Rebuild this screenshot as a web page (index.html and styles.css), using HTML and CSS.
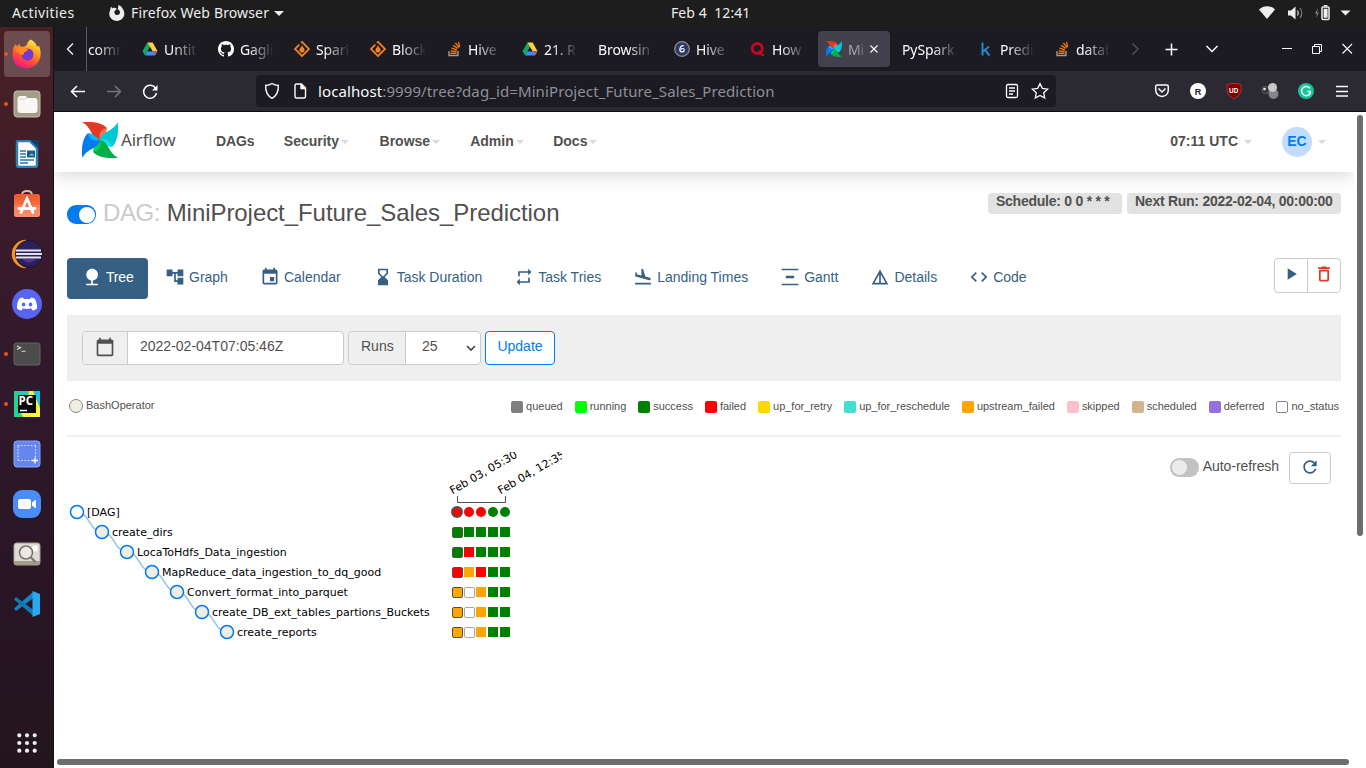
FILE: index.html
```html
<!DOCTYPE html>
<html lang="en">
<head>
<meta charset="utf-8">
<title>MiniProject_Future_Sales_Prediction - Tree - Airflow</title>
<link rel="stylesheet" href="styles.css">
</head>
<body>
<svg class="defs" width="0" height="0">
  <defs>
    <symbol id="drive" viewBox="0 0 16 16"><path d="M5.300 1.500L8 6 3 14.500.5 10.200z" fill="#11a861"/><path d="M5.300 1.500h5.400L15.500 10.200h-5z" fill="#ffcf48"/><path d="M3 14.500l2.500-4.300h10L13 14.500z" fill="#4688f4"/><path d="M8 6.200l2.400 4H5.600z" fill="#1c1b22"/><path d="M11.500 10.200h4L13.500 13.600z" fill="#ea4335"/></symbol>
    <symbol id="spark" viewBox="0 0 16 16"><path d="M7 1.800L8 .9l7.100 7.100L8 15.100.9 8l4.400-4.400" fill="none" stroke="#f48024" stroke-width="1.800"/><path d="M8 4c.3 2 2.600 2.800 2.600 5A2.600 2.600 0 0 1 5.400 9C5.400 7 7.800 6.200 8 4z" fill="#f48024"/></symbol>
    <symbol id="stack" viewBox="0 0 16 16"><path d="M3 10v4.500h9V10" fill="none" stroke="#9a9b9e" stroke-width="1.400"/><path d="M4.500 12.300h6M4.600 9.900l6 .6M5.400 7.200l5.600 1.600M7 4.400l4.900 3.100M9.400 2l3.700 4.600M12.400.8l1.300 5.200" stroke="#f2740d" stroke-width="1.400"/></symbol>
    <symbol id="pin" viewBox="0 0 36 36">
      <g><path d="M0 .3C10-.8 20 .5 25 6L22 10 18 18C8 16 11 6 0 .3z" fill="#e43921"/><path d="M25 6C25.500 9 22 13 18 18 16.500 12 19 7 25 6z" fill="#ff7557"/></g>
      <g transform="rotate(90 18 18)"><path d="M0 .3C10-.8 20 .5 25 6L22 10 18 18C8 16 11 6 0 .3z" fill="#00c7d4"/><path d="M25 6C25.500 9 22 13 18 18 16.500 12 19 7 25 6z" fill="#11e1ee"/></g>
      <g transform="rotate(180 18 18)"><path d="M0 .3C10-.8 20 .5 25 6L22 10 18 18C8 16 11 6 0 .3z" fill="#00ad46"/><path d="M25 6C25.500 9 22 13 18 18 16.500 12 19 7 25 6z" fill="#04d659"/></g>
      <g transform="rotate(270 18 18)"><path d="M0 .3C10-.8 20 .5 25 6L22 10 18 18C8 16 11 6 0 .3z" fill="#017cee"/><path d="M25 6C25.500 9 22 13 18 18 16.500 12 19 7 25 6z" fill="#0cb6ff"/></g>
    </symbol>
    <linearGradient id="fox" x1=".8" y1="0" x2=".3" y2="1"><stop offset="0" stop-color="#fff44f"/><stop offset=".35" stop-color="#ffa21c"/><stop offset=".65" stop-color="#ff5138"/><stop offset="1" stop-color="#f0148c"/></linearGradient>
    <linearGradient id="bag" x1="0" y1="0" x2="0" y2="1"><stop offset="0" stop-color="#ee5a2b"/><stop offset="1" stop-color="#f98157"/></linearGradient>
    <linearGradient id="pyc"><stop offset="0" stop-color="#20d38c"/><stop offset=".6" stop-color="#1ecbd0"/><stop offset="1" stop-color="#1ac0ee"/></linearGradient>
  </defs>
</svg>

<header class="topbar">
  <span class="top-act">Activities</span>
  <svg class="top-fox" width="16" height="16" viewBox="0 0 16 16"><path d="M2 1.500l1.200 1.700C4.500 2.500 5.500 2.600 6.300 3l1.700.9-2.200 1.800C5 7 5.400 8.500 6.500 9.500c1.800 1.300 4.500.2 4.500-2 0-1.700-1-2.500-2.200-3.300L9.500 0c2.500 1 3.500 2.300 4 3.600C18 10 13.500 16 8 16S-1.500 11 1 5.500z" fill="#eee"/></svg>
  <span class="top-app">Firefox Web Browser</span>
  <i class="tri"></i>
  <span class="top-date">Feb 4&nbsp; 12:41</span>
  <svg class="top-status" width="96" height="18" viewBox="0 0 96 18"><path d="M0 5.500C4.500 1 11.500 1 16 5.500L8 15z" fill="#eee"/><path d="M29 6.500h3l4.500-4v13l-4.500-4h-3z" fill="#eee"/><path d="M38.500 6.500q1.500 2.500 0 5" fill="none" stroke="#ccc" stroke-width="1.400"/><path d="M41 4q3.500 5 0 10" fill="none" stroke="#777" stroke-width="1.300"/><path d="M59 4l-3 5.500h2L57 14l3-5.500h-2z" fill="#888"/><rect x="63" y="3" width="7" height="12.500" rx="1" fill="none" stroke="#eee" stroke-width="1.500"/><path d="M64.600 4.700h4v9h-4zM64.800 1h3.500v1.500h-3.500z" fill="#eee"/><path d="M81.500 6.500h10l-5 5z" fill="#eee"/></svg>
</header>

<div class="desk">
<aside class="dock">
  <div class="app active run"><svg width="30" height="30" viewBox="0 0 30 30"><path d="M18.500.5c3.500 1.600 5.500 4 6.500 7l2-.5c3 7 2 14-3 18.500-5.500 5-15 5-20 0C0 21 0 14 1.500 8L4 5l1 3 2.500-3.500.5 3 4 .3 3-1.800C15 4 16.500 2 18.500.5z" fill="url(#fox)"/><circle cx="15.500" cy="15.500" r="6" fill="#7139cf"/><path d="M4 11c4-3 7-2.500 8.500-1l4 .3c-1 2.200-3.500 2.500-4.500 3.500 0 2-1 2.500-3 2z" fill="#ff8a22"/></svg></div>
  <div class="app run"><svg width="28" height="28" viewBox="0 0 28 28"><rect x="1" y="1" width="26" height="26" rx="3" fill="#a49c88" stroke="#c3bda9"/><path d="M4.500 9q0-3 3-3h5l2 2h7q3 0 3 3v9q0 3-3 3h-14q-3 0-3-3z" fill="#f8f7f4"/><path d="M5.500 9h7l2-1" fill="none" stroke="#d8d5cc"/></svg></div>
  <div class="app"><svg width="26" height="28" viewBox="0 0 26 28"><path d="M4 1h12l7 7v17q0 2-2 2H5q-2 0-2-2V3q0-2 1-2z" fill="#fff" stroke="#2882b8" stroke-width="2.500"/><path d="M16 0h9v9z" fill="#103f60"/><path d="M6 11h6M6 14h6M6 17h6M6 20h14M6 23h8" stroke="#2479ad" stroke-width="1.400"/><path d="M13 10.500h8v7h-8z" fill="#1c5e8c"/><path d="M15 15.500l3-2 2 2z" fill="#9fcae5"/></svg></div>
  <div class="app"><svg width="28" height="28" viewBox="0 0 28 28"><path d="M9 5q0-4 5-4t5 4" fill="none" stroke="#d9c19e" stroke-width="1.800"/><rect x="1" y="4" width="26" height="23" rx="2.500" fill="url(#bag)"/><path d="M1 15h26v10q0 2-2 2H3q-2 0-2-2z" fill="#fff" opacity=".12"/><path d="M8 22.500L14 8.500l6 14M6 18.500h16" fill="none" stroke="#fff" stroke-width="2.800" stroke-linecap="round"/></svg></div>
  <div class="app"><svg width="32" height="30" viewBox="0 0 32 30"><path d="M15 1.500A13.500 13.500 0 0 0 15 28.500 15 15 0 0 1 15 1.500z" fill="#f7941e" stroke="#f7941e" stroke-width="1.500"/><circle cx="18" cy="15" r="13.500" fill="#2b2156" stroke="#19123a"/><path d="M11 20q7 7 14 0z" fill="#4a378f"/><path d="M5 11.500h25M5 15h26M5 18.500h25" stroke="#e3e0ef" stroke-width="2.200"/></svg></div>
  <div class="app"><svg width="30" height="30" viewBox="0 0 30 30"><circle cx="15" cy="15" r="15" fill="#5865f2"/><path d="M11 8.500c-2 .3-3 .8-4 1.400-1.500 3-2.300 6-2 9.500 1.500 1.200 3 1.800 4.500 2.100l1.300-2.200q4.200 1.300 8.400 0l1.300 2.200c1.500-.3 3-.9 4.500-2.100.3-3.500-.5-6.500-2-9.500-1-.6-2.500-1.100-4-1.400l-.8 1.500h-6.400z" fill="#fff"/><ellipse cx="11.500" cy="15.500" rx="1.800" ry="2" fill="#5865f2"/><ellipse cx="18.500" cy="15.500" rx="1.800" ry="2" fill="#5865f2"/></svg></div>
  <div class="app run"><svg width="28" height="24" viewBox="0 0 28 24"><rect x="1" y="1" width="26" height="22" rx="2.500" fill="#4b4c4b" stroke="#656563"/><path d="M4 4l3.500 1.700L4 7.500M8.500 9.300h4" fill="none" stroke="#ddd" stroke-width="1.100"/></svg></div>
  <div class="app run"><svg width="26" height="26" viewBox="0 0 26 26"><path d="M0 0h26v26H0z" fill="url(#pyc)"/><path d="M15 0h4l7 17v9H0v-8l12 3z" fill="#f7f33e"/><path d="M0 8l9 18H0z" fill="#21d789"/><path d="M4 4h18v18H4z" fill="#080808"/><path d="M6 19.500h7" stroke="#fff" stroke-width="1.500"/><text x="4.600" y="14" class="pc">PC</text></svg></div>
  <div class="app"><svg width="28" height="28" viewBox="0 0 28 28"><rect x="1" y="1" width="26" height="26" rx="3" fill="#6586ee" stroke="#8caaf8"/><path d="M5 5.500h18M5 20.500h14M5 6v14M22.500 6v12" fill="none" stroke="#dce5ff" stroke-width="1.200" stroke-dasharray="1.500 1.700"/><path d="M19 20.500h6M22 17.500v6" stroke="#fff" stroke-width="1.300"/></svg></div>
  <div class="app"><svg width="28" height="28" viewBox="0 0 28 28"><rect width="28" height="28" rx="9" fill="#4a8cf8"/><rect x="5" y="9" width="13" height="10" rx="2" fill="#fff"/><path d="M19 12.500L23 9.500v9l-4-3z" fill="#fff"/></svg></div>
  <div class="app"><svg width="28" height="24" viewBox="0 0 28 24"><rect x="1" y="1" width="26" height="22" rx="2.500" fill="#dedbd2" stroke="#a6a294"/><path d="M1 19h26v2q0 2-2 2H3q-2 0-2-2z" fill="#a49c88"/><circle cx="22" cy="6.500" r="3" fill="#fff"/><circle cx="13" cy="10.500" r="6.500" fill="#e9e9e6" stroke="#77756f" stroke-width="1.600"/><path d="M17.500 15l5 5" stroke="#77756f" stroke-width="2.200"/></svg></div>
  <div class="app"><svg width="26" height="26" viewBox="0 0 26 26"><path d="M19 1L0 17.500l2 2.500L19.500 7z" fill="#1782c8"/><path d="M0 8.500L2 6l17.500 13V25z" fill="#1178b8"/><path d="M18.500 0L26 3v20l-7.500 3z" fill="#2aa7f0"/></svg></div>
  <div class="app apps"><svg width="20" height="20" viewBox="0 0 20 20"><path d="M2.300 2.300h.01M10 2.300h.01M17.700 2.300h.01M2.300 10h.01M10 10h.01M17.700 10h.01M2.300 17.700h.01M10 17.700h.01M17.700 17.700h.01" stroke="#eee" stroke-width="4.200" stroke-linecap="round"/></svg></div>
</aside>

<main class="browser">
  <div class="tabstrip">
    <div class="scroll-l"><svg width="10" height="14" viewBox="0 0 10 14"><path d="M8 1.500L2.500 7 8 12.500" fill="none" stroke="#eee" stroke-width="1.400"/></svg></div>
    <div class="tab first"><span>comn</span></div>
    <div class="tab"><svg class="fav"><use href="#drive"/></svg><span>Untit</span></div>
    <div class="tab"><svg class="fav" viewBox="0 0 16 16"><path fill="#fff" d="M8 0C3.580 0 0 3.580 0 8c0 3.540 2.290 6.530 5.470 7.590.4.070.55-.17.55-.38 0-.19-.01-.82-.01-1.490-2.010.37-2.530-.49-2.690-.94-.09-.23-.48-.94-.82-1.130-.28-.15-.68-.52-.01-.53.63-.01 1.080.58 1.230.82.72 1.210 1.870.87 2.330.66.070-.52.28-.87.51-1.070-1.780-.2-3.640-.89-3.640-3.950 0-.87.31-1.590.82-2.150-.08-.2-.36-1.020.08-2.120 0 0 .67-.21 2.200.82.64-.18 1.320-.27 2-.27s1.360.09 2 .27c1.530-1.040 2.200-.82 2.200-.82.44 1.100.16 1.920.08 2.120.51.56.82 1.270.82 2.150 0 3.070-1.870 3.750-3.650 3.950.29.25.54.73.54 1.480 0 1.070-.01 1.930-.01 2.200 0 .21.15.46.55.38A8.010 8.010 0 0 0 16 8c0-4.420-3.580-8-8-8z"/></svg><span>Gagli</span></div>
    <div class="tab"><svg class="fav"><use href="#spark"/></svg><span>Spark</span></div>
    <div class="tab"><svg class="fav"><use href="#spark"/></svg><span>Block</span></div>
    <div class="tab"><svg class="fav"><use href="#stack"/></svg><span>Hive</span></div>
    <div class="tab"><svg class="fav"><use href="#drive"/></svg><span>21. R</span></div>
    <div class="tab"><span>Browsin</span></div>
    <div class="tab"><svg class="fav" viewBox="0 0 16 16"><circle cx="8" cy="8" r="7.300" fill="#2f3a60" stroke="#8a90a4" stroke-width="1.200"/><path d="M9.800 4.800C7.500 4.300 6 6 5.800 8.500c0 3 4.200 3 4.400.6.100-2-2.400-2-3.500-.6" fill="none" stroke="#fff" stroke-width="1.200"/></svg><span>Hive</span></div>
    <div class="tab"><svg class="fav" viewBox="0 0 16 16"><circle cx="7.300" cy="7.500" r="5" fill="none" stroke="#c10824" stroke-width="3"/><path d="M8 10l4.500 4H14" fill="none" stroke="#c10824" stroke-width="2"/></svg><span>How</span></div>
    <div class="tab current"><svg class="fav"><use href="#pin"/></svg><span>Mi</span><svg class="x" width="8" height="8" viewBox="0 0 8 8"><path d="M.5.5l7 7M7.500.5l-7 7" stroke="#fff" stroke-width="1.100"/></svg></div>
    <div class="tab"><span>PySpark</span></div>
    <div class="tab"><svg class="fav" viewBox="0 0 16 16"><path d="M4.500 1.500v13M11 5.500L5 10.500M7 9l4.500 5.500" fill="none" stroke="#2a83c7" stroke-width="2"/></svg><span>Predi</span></div>
    <div class="tab"><svg class="fav"><use href="#stack"/></svg><span>datab</span></div>
    <svg class="strip-ctl" width="236" height="20" viewBox="0 0 236 20" fill="none" stroke="#fbfbfe"><path d="M6.500 4.500L12 10l-5.500 5.500" stroke="#55545c" stroke-width="1.300"/><path d="M45.500 4.500v12M39.500 10.500h12" stroke-width="1.500"/><path d="M80.500 7l5.500 5.500L91.500 7" stroke-width="1.500"/><path d="M156 9.500h10"/><path d="M186.500 7.500h7v7h-7zM188.500 7.500v-2h7v7h-2"/><path d="M216.500 5l9.500 9.500M226 5l-9.500 9.500" stroke-width="1.100"/></svg>
  </div>

  <div class="toolbar">
    <svg class="nav-ctl" width="96" height="20" viewBox="0 0 96 20" fill="none" stroke="#fbfbfe" stroke-width="1.500"><path d="M15 10.500H1.500M7 5L1.500 10.500 7 16"/><path d="M37 10.500h13.500M45 5l5.500 5.500L45 16" stroke="#76757d"/><path d="M85.700 7.500A6.500 6.500 0 1 0 86.500 12"/><path d="M87.500 4v5.500h-5.500z" fill="#fbfbfe" stroke="none"/></svg>
    <div class="urlbar">
      <svg width="44" height="18" viewBox="0 0 44 18" fill="none" stroke="#fbfbfe" stroke-width="1.400"><path d="M8 1.500c2 1.300 4 1.800 6.300 2C14.600 9 13 13.500 8 16.300 3 13.500 1.400 9 1.700 3.500 4 3.300 6 2.800 8 1.500z"/><path d="M31 3.500q0-1.500 1.500-1.500h5l4 4v8.500q0 1.500-1.500 1.500h-7.500q-1.500 0-1.500-1.500z"/><path d="M37 2v4.500h4.500" fill="#fbfbfe"/></svg>
      <div class="url"><b>localhost</b>:9999/tree?dag_id=MiniProject_Future_Sales_Prediction</div>
      <svg class="url-end" width="46" height="18" viewBox="0 0 46 18" fill="none" stroke="#fbfbfe" stroke-width="1.300"><rect x="2.500" y="2.500" width="11" height="13" rx="1.500"/><path d="M5 6h6M5 9h6M5 12h4"/><path d="M36 1.500l2.300 4.900 5.300.7-3.900 3.700 1 5.300-4.700-2.600-4.700 2.600 1-5.300-3.900-3.700 5.300-.7z"/></svg>
    </div>
    <svg class="exts" width="200" height="20" viewBox="0 0 200 20"><path d="M1.700 5.500q0-1.500 1.500-1.500h9.600q1.500 0 1.500 1.500v3.500c0 8.500-12.600 8.500-12.600 0z" fill="none" stroke="#fbfbfe" stroke-width="1.500"/><path d="M4.500 7.500L8 11l3.500-3.500" fill="none" stroke="#fbfbfe" stroke-width="1.500"/><circle cx="44" cy="10" r="8" fill="#fff"/><text x="40.700" y="13.500" class="ext r">R</text><path d="M80 2.500q4.500 0 7 1h.1V10q-1 5-7.100 8-6-3-7-8V3.500q3-1 7-1z" fill="#800000" stroke="#a33"/><text x="75" y="12.300" class="ext u">UD</text><circle cx="111.500" cy="9" r="3.700" fill="#383838" stroke="#5a5a5a"/><circle cx="110.500" cy="8" r="1.300" fill="#eee"/><circle cx="119.500" cy="13" r="5" fill="#858585"/><circle cx="118.500" cy="6.500" r="4.500" fill="#c8c8c8"/><circle cx="152" cy="10" r="8" fill="#15c39a"/><path d="M156 7.500a4.600 4.600 0 1 0 .3 4.500v-1.500h-3M156.500 11.500l-1.500 3" fill="none" stroke="#fff" stroke-width="1.500"/><path d="M182 5.500h12M182 10.500h12M182 15h12" stroke="#fbfbfe" stroke-width="1.400"/></svg>
  </div>

  <div class="page">
    <nav class="navbar">
      <svg class="logo" width="36" height="36"><use href="#pin"/></svg><span class="brand">Airflow</span>
      <a class="n1">DAGs</a><a class="dd sec">Security</a><a class="dd browse">Browse</a><a class="dd">Admin</a><a class="dd docs">Docs</a>
      <a class="clock dd">07:11 UTC</a><a class="user dd"><span class="avatar">EC</span></a>
    </nav>

    <div class="content">
      <div class="title-row">
        <span class="switch on"></span>
        <h3><em>DAG:</em> MiniProject_Future_Sales_Prediction</h3>
        <div class="labels"><span class="label l1">Schedule: 0 0 * * *</span><span class="label l2">Next Run: 2022-02-04, 00:00:00</span></div>
      </div>

      <div class="pill-row">
        <a class="pill sel"><svg viewBox="0 0 24 24"><path d="M13 16.120c3.470-.41 6.170-3.360 6.170-6.950 0-3.870-3.130-7-7-7s-7 3.130-7 7c0 3.470 2.520 6.340 5.830 6.890V20H5v2h14v-2h-6v-3.880z"/></svg>Tree</a>
        <a class="pill"><svg viewBox="0 0 24 24"><path d="M22 11V3h-7v3H9V3H2v8h7V8h2v10h4v3h7v-8h-7v3h-2V8h2v3z"/></svg>Graph</a>
        <a class="pill"><svg viewBox="0 0 24 24"><path d="M17 12h-5v5h5v-5zM16 1v2H8V1H6v2H5c-1.110 0-1.990.9-1.990 2L3 19c0 1.100.89 2 2 2h14c1.100 0 2-.9 2-2V5c0-1.100-.9-2-2-2h-1V1h-2zm3 18H5V8h14v11z"/></svg>Calendar</a>
        <a class="pill"><svg viewBox="0 0 24 24"><path d="M18 22l-.01-6L14 12l3.990-4.010L18 2H6v6l4 4-4 3.990V22h12zM8 7.500V4h8v3.500l-4 4-4-4z"/></svg>Task Duration</a>
        <a class="pill"><svg viewBox="0 0 24 24"><path d="M7 7h10v3l4-4-4-4v3H5v6h2V7zm10 10H7v-3l-4 4 4 4v-3h12v-6h-2v4z"/></svg>Task Tries</a>
        <a class="pill"><svg viewBox="0 0 24 24"><path d="M2.500 19h19v2h-19v-2zm7.180-5.730l4.350 1.160 5.310 1.420c.8.210 1.620-.26 1.840-1.060.21-.8-.26-1.620-1.060-1.840l-5.310-1.420-2.760-9.020L10.120 2v8.280L5.150 8.950l-.93-2.320-1.450-.39v5.170l1.600.43 5.310 1.430z"/></svg>Landing Times</a>
        <a class="pill"><svg viewBox="0 0 24 24"><path d="M22 2v2H2V2h20zM7 10.500v3h10v-3H7zM2 20v2h20v-2H2z"/></svg>Gantt</a>
        <a class="pill"><svg viewBox="0 0 24 24"><path d="M12 3L2 21h20L12 3zm1 5.920L18.600 19H13V8.920zm-2 0V19H5.400L11 8.920z"/></svg>Details</a>
        <a class="pill"><svg viewBox="0 0 24 24"><path d="M9.400 16.600L4.800 12l4.600-4.600L8 6l-6 6 6 6 1.400-1.400zm5.200 0l4.600-4.600-4.600-4.600L16 6l6 6-6 6-1.400-1.400z"/></svg>Code</a>
        <div class="actions"><a><svg viewBox="0 0 24 24" fill="#365f84"><path d="M8 5v14l11-7z"/></svg></a><a><svg viewBox="0 0 24 24" fill="#e43921"><path d="M6 19c0 1.100.9 2 2 2h8c1.100 0 2-.9 2-2V7H6v12zM8 9h8v10H8V9zm7.500-5l-1-1h-5l-1 1H5v2h14V4z"/></svg></a></div>
      </div>

      <form class="filters">
        <div class="group g1"><span class="addon"><svg width="20" height="20" viewBox="0 0 24 24"><path fill="#51504f" d="M20 3h-1V1h-2v2H7V1H5v2H4c-1.100 0-2 .9-2 2v16c0 1.100.9 2 2 2h16c1.100 0 2-.9 2-2V5c0-1.100-.9-2-2-2zm0 18H4V8h16v13z"/></svg></span><span class="field">2022-02-04T07:05:46Z</span></div>
        <div class="group g2"><span class="addon">Runs</span><span class="field">25<svg width="10" height="7" viewBox="0 0 10 7"><path d="M1 1l4 4 4-4" fill="none" stroke="#444" stroke-width="1.600"/></svg></span></div>
        <span class="update">Update</span>
      </form>

      <div class="legend">
        <span class="op"><i></i>BashOperator</span>
        <span class="st"><i style="background:gray"></i>queued</span>
        <span class="st"><i style="background:lime"></i>running</span>
        <span class="st"><i style="background:green"></i>success</span>
        <span class="st"><i style="background:red"></i>failed</span>
        <span class="st"><i style="background:gold"></i>up_for_retry</span>
        <span class="st"><i style="background:turquoise"></i>up_for_reschedule</span>
        <span class="st"><i style="background:orange"></i>upstream_failed</span>
        <span class="st"><i style="background:pink"></i>skipped</span>
        <span class="st"><i style="background:tan"></i>scheduled</span>
        <span class="st"><i style="background:mediumpurple"></i>deferred</span>
        <span class="st"><i class="none"></i>no_status</span>
      </div>

      <div class="view">
        <svg id="tree" class="tree" width="495" height="200" viewBox="0 0 495 200"></svg>
        <div class="refresh"><span class="switch"></span><span class="rl">Auto-refresh</span><a class="rbtn"><svg width="20" height="20" viewBox="0 0 24 24"><path fill="#365f84" d="M17.650 6.350C16.200 4.900 14.210 4 12 4c-4.420 0-7.990 3.580-7.990 8s3.570 8 7.990 8c3.730 0 6.840-2.550 7.730-6h-2.080c-.82 2.330-3.040 4-5.650 4-3.310 0-6-2.690-6-6s2.690-6 6-6c1.660 0 3.140.69 4.220 1.780L13 11h7V4l-2.350 2.350z"/></svg></a></div>
      </div>
    </div>
    <div class="vbar"></div>
    <div class="hbar"></div>
  </div>
</main>
</div>
<script src="tree.js"></script>
</body>
</html>
```

FILE: styles.css
```css
* { box-sizing: border-box; }
body { margin: 0; width: 1366px; height: 768px; overflow: hidden; display: flex; flex-direction: column; background: #fff; color: #51504f; font: 14px/20px "Liberation Sans", Arial, sans-serif; }
svg { display: block; flex: none; }
.defs { position: absolute; }
.topbar { height: 27px; flex: none; display: flex; align-items: center; background: #1d1d1d; color: #eee; font: 14px/26px "Noto Sans", sans-serif; white-space: pre; }
.topbar span { height: 27px; }
.top-act { width: 96px; padding-left: 12px; letter-spacing: .42px; }
.top-fox { margin-left: 13px; margin-top: -1px; }
.top-app { width: 139px; margin-left: 6px; letter-spacing: .14px; }
.tri { margin-left: 4px; border: 5px solid transparent; border-top-color: #eee; border-bottom: 0; }
.top-date { margin-left: 387px; width: 80px; letter-spacing: .08px; }
.top-status { margin-left: auto; margin-right: 11px; margin-top: -1px; }
.desk { flex: 1; display: flex; min-height: 0; }
.dock { width: 54px; flex: none; padding-top: 2px; display: flex; flex-direction: column; background: linear-gradient(#492123, #3c1b2b 25%, #30192c 48%, #2a1626 70%, #23151d); border-right: 1px solid #181018; }
.app { height: 50px; flex: none; display: flex; align-items: center; justify-content: center; position: relative; }
.app.active::after { content: ""; position: absolute; left: 4px; top: 2px; width: 46px; height: 46px; border-radius: 4px; background: rgba(255,255,255,.2); }
.app.active svg { z-index: 1; }
.app.run::before { content: ""; position: absolute; left: 4px; top: 23px; width: 4px; height: 4px; border-radius: 2px; background: #e95420; z-index: 2; }
.apps { margin-top: auto; }
.pc { font: bold 11.500px "Open Sans", sans-serif; fill: #fff; }
.browser { flex: 1; display: flex; flex-direction: column; min-width: 0; }
.tabstrip { height: 44px; flex: none; display: flex; align-items: center; background: #1c1b22; color: #fbfbfe; font: 14px/20px "Noto Sans", sans-serif; }
.scroll-l { width: 33px; height: 44px; padding: 15px 0 0 11px; border-right: 1px solid #5b5a62; flex: none; }
.tab { width: 72px; height: 36px; margin-right: 4px; padding: 0 8px; flex: none; display: flex; align-items: center; gap: 6px; }
.tab.first { width: 43px; padding-left: 1px; }
.tab span { flex: 1; min-width: 0; margin-top: 1px; overflow: hidden; white-space: nowrap; letter-spacing: -.1px; -webkit-mask-image: linear-gradient(90deg, #000 calc(100% - 26px), transparent); mask-image: linear-gradient(90deg, #000 calc(100% - 26px), transparent); }
.tab.current { background: #42414d; border-radius: 4px; }
.tab.current span { color: #aaa9b0; -webkit-mask-image: linear-gradient(90deg, #000 40%, transparent 110%); mask-image: linear-gradient(90deg, #000 40%, transparent 110%); }
.tab.current .x { margin: 0 4px 0 -2px; }
.fav { width: 16px; height: 16px; }
.strip-ctl { margin-left: 4px; }
.toolbar { height: 41px; flex: none; display: flex; align-items: center; background: #2b2a33; border-bottom: 1px solid #0c0c0d; }
.nav-ctl { margin-left: 16px; }
.urlbar { width: 800px; height: 32px; margin-left: 90px; padding: 0 6px 0 8px; border-radius: 4px; background: #1c1b22; display: flex; align-items: center; }
.url { margin-left: 10px; color: #8f8f98; font: 15px/20px "Noto Sans", sans-serif; letter-spacing: .1px; white-space: nowrap; }
.url b { font-weight: 400; color: #fbfbfe; }
.url-end { margin-left: auto; }
.exts { margin-left: 98px; }
.ext { font: bold 9px "Liberation Sans", sans-serif; }
.ext.r { fill: #222; }
.ext.u { font-size: 6.500px; fill: #fff; }
.page { flex: 1; position: relative; min-height: 0; background: #fff; }
.navbar { width: 1300px; height: 60px; padding: 0 28px; display: flex; align-items: center; box-shadow: 0 3px 18px rgba(0,0,0,.16); clip-path: inset(0 0 -30px 0); font-weight: 700; }
.navbar a { margin-left: 30px; display: flex; align-items: center; white-space: nowrap; margin-top: -2px; }
.navbar a.n1 { margin-left: 41px; letter-spacing: -.15px; }
.navbar a.sec { margin-left: 29.500px; }
.navbar a.browse { margin-left: 30.500px; }
.navbar a.docs { margin-left: 29.500px; }
.logo { margin-top: -4px; }
.brand { width: 54px; margin-left: 3px; margin-top: -4px; font: 17px/20px "Noto Sans", sans-serif; letter-spacing: -.2px; }
.dd::after { content: ""; margin-left: 2px; margin-top: 2px; border: 4px solid transparent; border-top-color: #e2d2e2; border-bottom: 0; }
.navbar .clock { margin-left: auto; }
.clock::after { margin-left: 6px; }
.navbar a.user { margin-left: 30px; }
.user::after { margin-left: 6px; }
.avatar { width: 30px; height: 30px; border-radius: 50%; background: #c2dcfb; color: #017cee; text-align: center; line-height: 28px; margin-top: 2px; }
.content { width: 1274px; margin-left: 13px; }
.title-row { height: 86px; display: flex; padding-top: 21px; }
.switch { width: 29px; height: 18px; flex: none; border-radius: 9px; background: #c3c2c1; display: flex; padding: 2px; }
.switch::before { content: ""; width: 15px; height: 14px; border-radius: 50%; background: #edecec; }
.switch.on { background: #017cee; justify-content: flex-end; padding: 1.500px; margin-top: 12px; height: 19px; }
.switch.on::before { width: 16px; height: 16px; background: #fff; }
h3 { margin: 6px 0 0 7px; font: 24px/28px "Liberation Sans", sans-serif; letter-spacing: -.06px; white-space: nowrap; }
h3 em { font-style: normal; color: #cbcbcb; letter-spacing: -.4px; }
.labels { margin-left: auto; display: flex; gap: 5px; }
.label { height: 21px; padding: 0 8px; border-radius: 4px; background: #e2e2e2; font-weight: 700; line-height: 17px; white-space: nowrap; }
.l1 { width: 134px; letter-spacing: -.25px; }
.l2 { width: 214px; letter-spacing: -.26px; }
.pill-row { display: flex; gap: 2px; height: 57px; }
.pill { height: 41px; padding: 0 15px; display: flex; align-items: center; gap: 4px; color: #365f84; white-space: nowrap; line-height: 37px; padding-bottom: 3px; letter-spacing: -.005px; }
.pill svg { width: 20px; height: 20px; fill: currentColor; }
.pill.sel { width: 81px; background: #365f84; color: #fff; border-radius: 4px; letter-spacing: -.2px; }
.actions { margin-left: auto; display: flex; height: 35px; border: 1px solid #cbcbcb; border-radius: 4px; }
.actions a { width: 32px; padding: 5px 0 0 6px; }
.actions a + a { border-left: 1px solid #cbcbcb; width: 33px; padding-left: 6px; }
.actions svg { width: 20px; height: 20px; }
.filters { height: 66px; padding: 16px 15px; background: #efefef; display: flex; gap: 4px; }
.group { height: 34px; display: flex; border: 1px solid #cbcbcb; border-radius: 4px; line-height: 29px; background: #fff; overflow: hidden; }
.g1 { width: 262px; } .g2 { width: 133px; }
.addon { flex: none; width: 45px; background: #efefef; border-right: 1px solid #cbcbcb; padding: 5px 0 0 12px; }
.g2 .addon { width: 57px; padding: 0 0 0 12px; }
.field { flex: 1; padding-left: 12px; display: flex; }
.g2 .field { padding-left: 16px; }
.field svg { margin: 13px 4px 0 auto; }
.update { width: 70px; height: 34px; border: 1px solid #017cee; border-radius: 4px; background: #fff; color: #017cee; text-align: center; line-height: 29px; }
.legend { height: 56px; display: flex; align-items: flex-start; padding: 17px 2px 0; border-bottom: 2px solid #efefef; font-size: 11px; line-height: 17px; gap: 12px; }
.op, .st { display: flex; white-space: nowrap; }
.st { letter-spacing: -.02px; }
.op { margin-right: auto; line-height: 15px; }
.op i { width: 14px; height: 14px; margin: 1px 3px 0 0; border: 1px solid #888; border-radius: 50%; background: #f0ede4; }
.st i { width: 12px; height: 12px; margin: 3px 3px 0 0; border-radius: 2px; }
.st i.none { border: 1px solid #888; }
.view { display: flex; justify-content: space-between; padding-top: 15px; }
.refresh { display: flex; padding-right: 10px; }
.refresh .switch { margin-top: 6px; height: 19px; }
.refresh .switch::before { height: 15px; }
.rl { margin: 4px 10px 0 4px; letter-spacing: -.07px; }
.rbtn { width: 42px; height: 32px; border: 1px solid #cbcbcb; border-radius: 3px; padding: 4px 0 0 10px; }
.tree text { font: 11px "DejaVu Sans", sans-serif; fill: #000; }
.vbar { position: absolute; left: 1303px; top: 3px; width: 6px; height: 421px; border-radius: 3px; background: #6d6d6d; }
.hbar { position: absolute; left: 3px; top: 647px; width: 1292px; height: 6px; border-radius: 3px; background: #6d6d6d; }
```

FILE: tree.js
```js
const tasks = [
  ['[DAG]', 'rrrgg'],
  ['create_dirs', 'ggggg'],
  ['LocaToHdfs_Data_ingestion', 'grggg'],
  ['MapReduce_data_ingestion_to_dq_good', 'rorgg'],
  ['Convert_format_into_parquet', 'onogg'],
  ['create_DB_ext_tables_partions_Buckets', 'onogg'],
  ['create_reports', 'onogg']
];
const colors = { r: 'red', g: 'green', o: 'orange', n: 'white' };
let links = '', nodes = '', runs = '';
tasks.forEach(([name, states], i) => {
  const x = 10 + 25 * i, y = 60 + 20 * i;
  if (i < tasks.length - 1) {
    links += `<path d="M${x} ${y}C${x + 12.5} ${y} ${x + 12.5} ${y + 20} ${x + 25} ${y + 20}" fill="none" stroke="#9ec6e2" stroke-width="1.5"/>`;
  }
  nodes += `<circle cx="${x}" cy="${y}" r="6.5" fill="${i ? '#f0ede4' : '#fff'}" stroke="#017cee" stroke-width="1.5"/><text x="${x + 10}" y="${y + 4}">${name}</text>`;
  [...states].forEach((s, j) => {
    const cx = 390 + 12 * j;
    if (i === 0) {
      runs += `<circle cx="${cx}" cy="${y}" r="5" fill="${colors[s]}" ${j ? '' : 'stroke="#51504f" stroke-width="2"'}/>`;
    } else if (j === 0 || s === 'n') {
      runs += `<rect x="${cx - 4.5}" y="${y - 4.5}" width="10" height="10" rx="1.5" fill="${colors[s]}" stroke="${j ? '#a5a5a5' : '#51504f'}"/>`;
    } else {
      runs += `<rect x="${cx - 5}" y="${y - 5}" width="10" height="10" fill="${colors[s]}"/>`;
    }
  });
});
const axis = '<path d="M390.5 44v6.500h48V44" fill="none" stroke="#51504f"/>' +
  '<text transform="translate(385.500 42.500) rotate(-30)">Feb 03, 05:30</text>' +
  '<text transform="translate(433.500 42.500) rotate(-30)">Feb 04, 12:35</text>';
document.getElementById('tree').innerHTML = links + nodes + runs + axis;
```
